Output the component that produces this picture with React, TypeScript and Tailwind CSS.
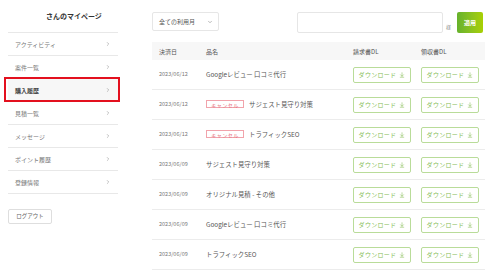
import { ChevronDown, ChevronRight, ArrowDownToLine } from "lucide-react";

const menu = [
  "アクティビティ",
  "案件一覧",
  "購入履歴",
  "見積一覧",
  "メッセージ",
  "ポイント履歴",
  "登録情報",
];

const rows = [
  { date: "2023/06/12", name: "Googleレビュー 口コミ代行", cancel: false },
  { date: "2023/06/12", name: "サジェスト見守り対策", cancel: true },
  { date: "2023/06/12", name: "トラフィックSEO", cancel: true },
  { date: "2023/06/09", name: "サジェスト見守り対策", cancel: false },
  { date: "2023/06/09", name: "オリジナル見積 - その他", cancel: false },
  { date: "2023/06/09", name: "Googleレビュー 口コミ代行", cancel: false },
  { date: "2023/06/09", name: "トラフィックSEO", cancel: false },
];

function DlButton() {
  return (
    <button className="flex h-[16px] w-[58px] items-center justify-center gap-[3px] rounded-[2px] border border-[#b9dc99] bg-white text-[6px] tracking-[0.3px] text-[#86bd55]">
      ダウンロード
      <ArrowDownToLine size={6} strokeWidth={2.2} />
    </button>
  );
}

export default function App() {
  return (
    <div
      className="flex h-[274px] w-[500px] bg-white"
      style={{ fontFamily: '"Noto Sans CJK JP", "Noto Sans", sans-serif' }}
    >
      {/* sidebar */}
      <aside className="w-[126px] shrink-0 px-2">
        <div className="flex h-[32px] items-center pl-[38px] text-[7px] font-bold text-[#333]">
          さんのマイページ
        </div>
        <ul className="border-t border-[#e8e8e8]">
          {menu.map((m) => {
            const active = m === "購入履歴";
            return (
              <li
                key={m}
                className={`relative flex h-[23px] items-center justify-between border-b border-[#e8e8e8] pl-[7px] pr-[7px] text-[6px] ${
                  active ? "bg-[#f7f7f7] font-bold text-[#444]" : "text-[#777]"
                }`}
              >
                <span>{m}</span>
                <ChevronRight size={6} strokeWidth={2} className="text-[#888]" />
                {active && (
                  <span className="pointer-events-none absolute -top-[2px] -right-[2px] -bottom-[1px] -left-[4px] border-2 border-[#e3101e]" />
                )}
              </li>
            );
          })}
        </ul>
        <button className="mt-[15px] flex h-[15px] w-[44px] items-center justify-center rounded-[2px] border border-[#dedede] text-[5.5px] text-[#666]">
          ログアウト
        </button>
      </aside>

      {/* main */}
      <main className="ml-[26px] w-[333px] pt-[12px]">
        <div className="flex items-end">
          <div className="mb-[2px] flex h-[19px] w-[67px] items-center justify-between rounded-[2px] border border-[#e6e6e6] pl-[6px] pr-[5px] text-[6px] text-[#555]">
            全ての利用月
            <ChevronDown size={6} strokeWidth={2} className="text-[#777]" />
          </div>
          <div className="ml-[78px] h-[21px] w-[146px] rounded-[2px] border border-[#e6e6e6]" />
          <span className="mb-[3px] ml-[3px] text-[5px] text-[#888]">様</span>
          <button className="ml-[6px] flex h-[21px] w-[26px] items-center justify-center rounded-[2px] bg-gradient-to-r from-[#66b22c] to-[#a8d000] text-[6px] font-bold text-white">
            適用
          </button>
        </div>

        <div className="mt-[9px]">
          <div className="flex h-[18px] items-center bg-[#f7f7f7] text-[6px] text-[#555]">
            <div className="w-[54px] pl-[7px]">決済日</div>
            <div className="w-[147px]">品名</div>
            <div className="w-[68px]">請求書DL</div>
            <div>領収書DL</div>
          </div>
          {rows.map((r, i) => (
            <div
              key={i}
              className="flex h-[30px] items-center border-b border-[#ececec] text-[#555]"
            >
              <div className="w-[54px] pl-[7px] text-[5.5px] text-[#777]">
                {r.date}
              </div>
              <div className="flex w-[147px] items-center gap-[5px] text-[6.4px]">
                {r.cancel && (
                  <span className="flex h-[8px] w-[38px] items-center justify-center border border-[#f1a3ab] text-[5px] tracking-[0.5px] text-[#e6707c]">
                    キャンセル
                  </span>
                )}
                <span>{r.name}</span>
              </div>
              <div className="flex gap-[10px]">
                <DlButton />
                <DlButton />
              </div>
            </div>
          ))}
        </div>
      </main>
    </div>
  );
}
